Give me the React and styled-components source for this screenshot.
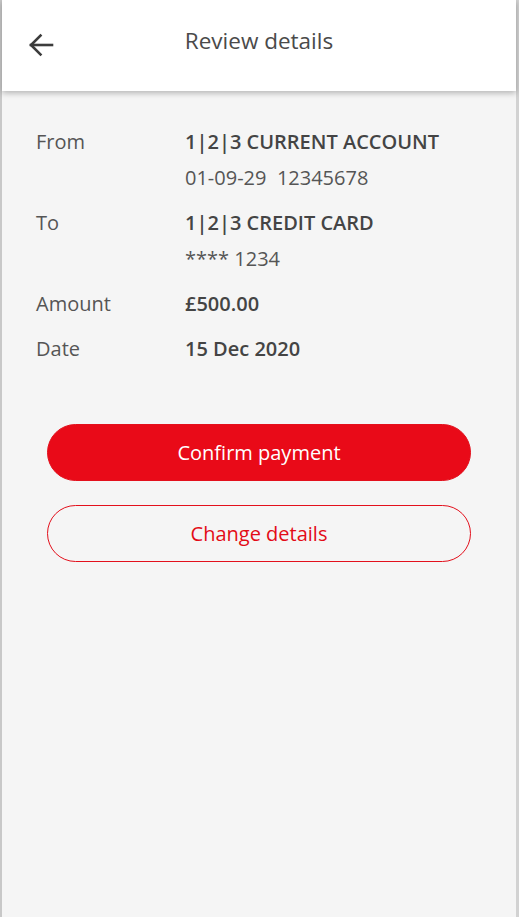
import styled, { createGlobalStyle } from 'styled-components'

const GlobalStyle = createGlobalStyle`
  html, body {
    margin: 0;
    padding: 0;
    background: #f5f5f5;
  }
  body {
    font-family: "Open Sans", "Noto Sans", sans-serif;
    color: #444;
  }
`

const details = [
  { label: 'From', value: '1|2|3 CURRENT ACCOUNT', sub: '01-09-29  12345678' },
  { label: 'To', value: '1|2|3 CREDIT CARD', sub: '**** 1234' },
  { label: 'Amount', value: '£500.00' },
  { label: 'Date', value: '15 Dec 2020' },
]

export default function App() {
  return <Screen>
      <GlobalStyle />
      <Header>
        <BackButton aria-label="Back">
          <svg width="28" height="28" viewBox="0 0 28 28" fill="none" stroke="#3c3c3c" strokeWidth="2.6" strokeLinecap="square">
            <path d="M25 14H4" />
            <path d="M13.5 4.5L4 14l9.5 9.5" />
          </svg>
        </BackButton>
        <Title>Review details</Title>
      </Header>

      <Details>
        {details.map(d => (
          <Row key={d.label}>
            <Label>{d.label}</Label>
            <div>
              <Value>{d.value}</Value>
              {d.sub && <Sub>{d.sub}</Sub>}
            </div>
          </Row>
        ))}
      </Details>

      <Actions>
        <Button primary>Confirm payment</Button>
        <Button>Change details</Button>
      </Actions>
    </Screen>
}

const Screen = styled.div`
  box-sizing: border-box;
  width: 519px;
  min-height: 917px;
  background: #f5f5f5;
  border-left: 2px solid #c8c8c8;
  border-right: 3px solid #d2d2d2;
`

const Header = styled.header`
  position: relative;
  display: flex;
  align-items: center;
  justify-content: center;
  height: 91px;
  background: #fff;
  box-shadow: 0 2px 6px rgba(0, 0, 0, 0.28);
`

const BackButton = styled.button`
  position: absolute;
  left: 25px;
  top: 31px;
  display: flex;
  padding: 0;
  border: 0;
  background: none;
`

const Title = styled.h1`
  margin: 0 0 10px;
  font-size: 22.5px;
  font-weight: 400;
  color: #4a4a4a;
`

const Details = styled.div`
  display: flex;
  flex-direction: column;
  gap: 9px;
  padding: 33px 20px 0 34px;
`

const Row = styled.div`
  display: grid;
  grid-template-columns: 149px 1fr;
  font-size: 20px;
  line-height: 36px;
`

const Label = styled.div`
  color: #555;
`

const Value = styled.div`
  font-weight: 600;
  color: #444;
`

const Sub = styled.div`
  white-space: pre;
  color: #555;
`

const Actions = styled.div`
  display: flex;
  flex-direction: column;
  gap: 24px;
  padding: 57px 45px 0 45px;
`

const Button = styled.button`
  box-sizing: border-box;
  height: 57px;
  border-radius: 29px;
  font-family: "Open Sans", sans-serif;
  font-size: 20px;
  border: 1.5px solid #e3101c;
  background: ${p => (p.primary ? '#e90a18' : 'transparent')};
  color: ${p => (p.primary ? '#fff' : '#e30b17')};
`
